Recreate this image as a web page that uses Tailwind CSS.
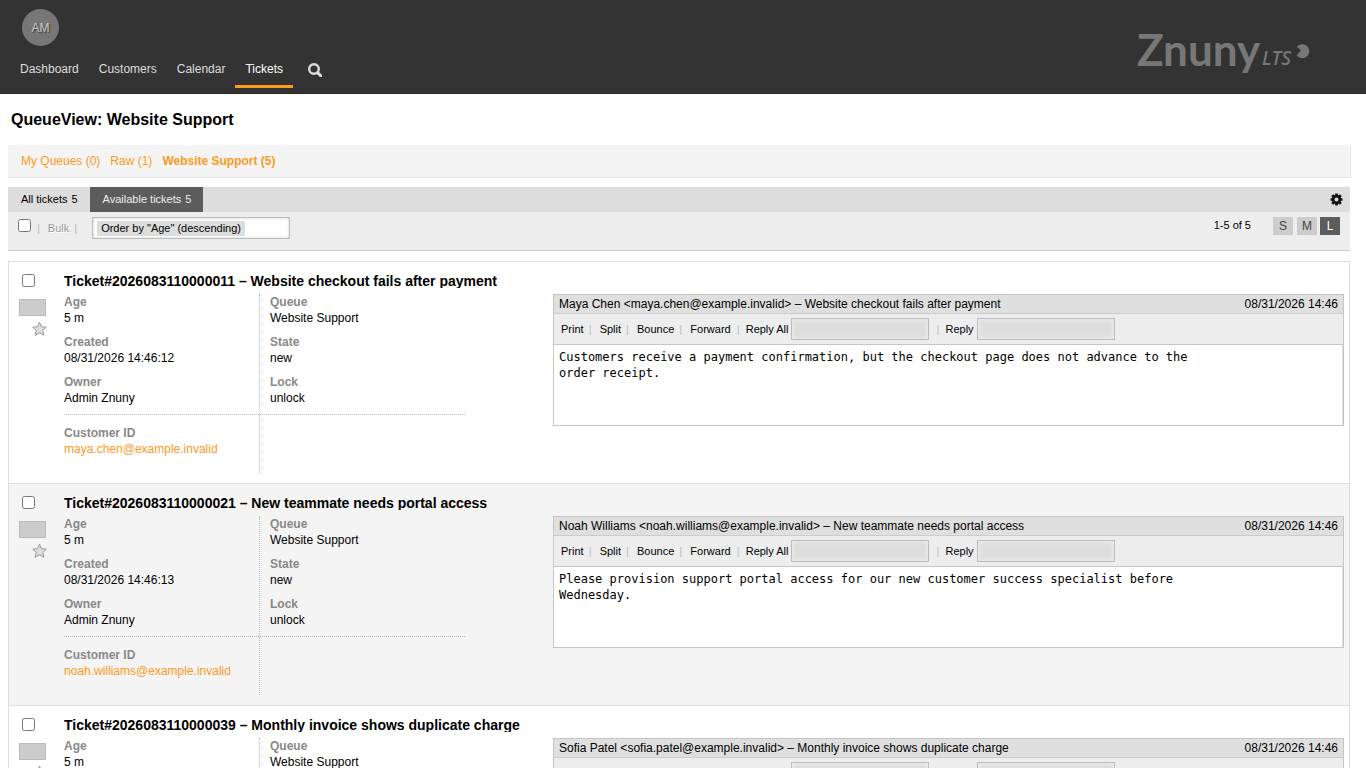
<!DOCTYPE html>
<html lang="en">

<head>
    <meta charset="UTF-8">
    <meta name="viewport" content="width=device-width, initial-scale=1.0">
    <title>QueueView: Website Support - Znuny</title>
    <script src="https://cdn.jsdelivr.net/npm/@tailwindcss/browser@4"></script>
    <style>
        body {
            font-family: 'Liberation Sans', Arial, sans-serif;
        }
    </style>
</head>

<body class="bg-white text-black text-[12px] leading-4">
    <header class="flex justify-between h-[94px] bg-[#333] border-b border-[#2b2b2b]">
        <div class="pt-[9px] pl-[10px]">
            <button type="button" aria-label="Admin menu"
                class="block ml-3 size-[37px] rounded-full bg-[#777] text-[#ccc] text-[12px] [text-shadow:1px_1px_1px_#333]">AM</button>
            <nav class="flex mt-[11px] text-[#ddd]">
                <a href="#" class="h-[31px] pt-1 px-[10px]">Dashboard</a>
                <a href="#" class="h-[31px] pt-1 px-[10px]">Customers</a>
                <a href="#" class="h-[31px] pt-1 px-[10px]">Calendar</a>
                <a href="#" class="h-[31px] pt-1 px-[10px] text-white border-b-3 border-[#ff9922]">Tickets</a>
                <a href="#" aria-label="Search" class="pt-[6px] px-[15px]">
                    <svg class="size-[14px]" viewBox="0 0 14 14" fill="none" stroke="#ddd">
                        <circle cx="6" cy="6" r="4.8" stroke-width="2.4" />
                        <path d="M9.6 9.6L12.7 12.7" stroke-width="3" stroke-linecap="round" />
                    </svg>
                </a>
            </nav>
        </div>
        <!-- Logo -->
        <svg class="w-[180px] h-[52px] mt-[29px] mr-[50px]" viewBox="0 0 180 52" fill="#777" role="img" aria-label="Znuny LTS">
            <text x="1" y="37" font-family="Lato, sans-serif" font-size="44" font-weight="700">Znuny</text>
            <text x="126" y="36" font-family="Open Sans, sans-serif" font-size="19" font-style="italic" font-weight="600">LTS</text>
            <path d="M165 21.5L160.8 17.8A7 7 0 1 1 160.6 26.2Z" />
        </svg>
    </header>

    <main class="pl-2 pr-4">
        <h1 class="pl-[3px] pt-4 pb-[15px] text-[16px] leading-5 font-bold">QueueView: Website Support</h1>

        <ul class="flex gap-[10px] -mr-px px-[13px] h-[33px] pt-2 bg-[#f4f4f4] border-r border-b border-[#e8e8e8] text-[#ff9922]">
            <li><a href="#">My Queues (0)</a></li>
            <li><a href="#">Raw (1)</a></li>
            <li><a href="#" class="font-bold">Website Support (5)</a></li>
        </ul>

        <div class="flex mt-[9px] h-[25px] bg-[#ddd] text-[11px] leading-[25px]">
            <a href="#" class="flex gap-1 pl-[13px] pr-3">All tickets <span>5</span></a>
            <a href="#" class="flex gap-1 pl-[13px] pr-3 bg-[#5c5c5c] text-[#eee]">Available tickets <span>5</span></a>
            <button type="button" aria-label="Settings" class="flex items-center ml-auto mr-[7px]">
                <svg class="size-[13px]" viewBox="0 0 24 24" fill="none" stroke="#111">
                    <circle cx="12" cy="12" r="6.2" stroke-width="5" />
                    <path d="M12 1V5M12 19V23M1 12H5M19 12H23M4 4L7 7M17 17L20 20M20 4L17 7M4 20L7 17" stroke-width="5" />
                </svg>
            </button>
        </div>

        <div class="flex items-start h-[39px] pl-[10px] pr-[10px] bg-[#ededed] border-b border-[#ccc] text-[11px]">
            <input type="checkbox" aria-label="Select all tickets" class="mt-[7px] size-[13px]">
            <span class="mt-2 ml-[6px] text-[#bbb]">|</span>
            <button type="button" disabled class="mt-2 ml-[8px] text-[#999] [text-shadow:1px_1px_0_#fff]">Bulk</button>
            <span class="mt-2 ml-[5px] text-[#bbb]">|</span>
            <div class="mt-[5px] ml-[15px] w-[198px] h-[22px] pt-[3px] pl-1 bg-white border border-[#bbb] shadow-[inset_0_0_3px_#ccc]">
                <select aria-label="Order by"
                    class="block appearance-none w-[148px] h-[15px] pl-1 bg-[#ddd] text-[11px] leading-[15px]">
                    <option>Order by "Age" (descending)</option>
                </select>
            </div>
            <span class="ml-auto mt-[5px]">1-5 of 5</span>
            <div class="flex gap-[3px] mt-[5px] ml-[22px] text-[12px] leading-[18px] text-center text-[#444]">
                <a href="#" class="w-5 h-[18px] mr-px bg-[#ccc]">S</a>
                <a href="#" class="w-5 h-[18px] bg-[#ccc]">M</a>
                <a href="#" class="w-5 h-[18px] bg-[#5c5c5c] text-white">L</a>
            </div>
        </div>

        <ul id="tickets" class="mt-[10px] border-x border-t border-[#ddd]">
            <!-- Tickets will be inserted here -->
        </ul>
    </main>

    <script>
        const tickets = [
            {
                number: '2026083110000011', title: 'Website checkout fails after payment', created: '08/31/2026 14:46:12',
                name: 'Maya Chen', email: 'maya.chen@example.invalid',
                body: 'Customers receive a payment confirmation, but the checkout page does not advance to the\norder receipt.'
            },
            {
                number: '2026083110000021', title: 'New teammate needs portal access', created: '08/31/2026 14:46:13',
                name: 'Noah Williams', email: 'noah.williams@example.invalid',
                body: 'Please provision support portal access for our new customer success specialist before\nWednesday.'
            },
            {
                number: '2026083110000039', title: 'Monthly invoice shows duplicate charge', created: '08/31/2026 14:46:13',
                name: 'Sofia Patel', email: 'sofia.patel@example.invalid',
                body: ''
            }
        ];

        const field = (label, value) => `
            <dt class="font-bold text-[#888]">${label}</dt>
            <dd class="mb-2">${value}</dd>`;

        const separator = '<span class="w-[3px] ml-[5px] mr-2 text-[#bbb]">|</span>';

        document.getElementById('tickets').innerHTML = tickets.map((t, i) => `
            <li class="flex items-start h-[222px] pt-[11px] border-b border-[#ddd] ${i % 2 ? 'bg-[#f4f4f4]' : 'bg-white'}">
                <div class="w-[55px] shrink-0 pl-[10px]">
                    <input type="checkbox" id="ticket${i}" aria-label="Select ticket ${t.number}" class="block mt-px ml-[3px] size-[13px]">
                    <div class="mt-3 w-[27px] h-[17px] bg-[#ccc] border border-[#bbb]"></div>
                    <svg class="mt-[5px] ml-3 w-4 h-4" viewBox="0 0 16 16" fill="#ddd" stroke="#999">
                        <path d="M8.5 1.2L10.5 5.7L15.3 6.2L11.7 9.5L13 14.2L8.5 11.9L4 14.2L5.3 9.5L1.7 6.2L6.5 5.7Z" />
                    </svg>
                </div>
                <div class="flex-1 min-w-0">
                    <h2 class="h-[15px] mb-[6px] overflow-hidden whitespace-nowrap text-[14px] leading-4 font-bold">Ticket#${t.number} – ${t.title}</h2>
                    <div class="flex items-start justify-between">
                        <div class="grid grid-cols-[196px_1fr] w-[401px]">
                            <dl class="h-[120px] border-r border-dotted border-[#bbb]">
                                ${field('Age', '5 m')}${field('Created', t.created)}${field('Owner', 'Admin Znuny')}
                            </dl>
                            <dl class="pl-[10px]">
                                ${field('Queue', 'Website Support')}${field('State', 'new')}${field('Lock', 'unlock')}
                            </dl>
                            <div class="col-span-2 border-t border-dotted border-[#bbb]"></div>
                            <dl class="h-[58px] pt-[10px] border-r border-dotted border-[#bbb]">
                                ${field('Customer ID', `<a href="#" class="text-[#ff9922]">${t.email}</a>`)}
                            </dl>
                        </div>
                        <article class="w-[59%] max-w-[791px] grow ml-[88px] h-[132px] mr-[5px] bg-white border border-[#c5c5c5]">
                            <div class="flex justify-between h-[19px] pl-[5px] pr-[5px] leading-[18px] bg-[#dfdfdf] border-b border-[#ccc]">
                                <span>${t.name} &lt;${t.email}&gt; – ${t.title}</span>
                                <span>08/31/2026 14:46</span>
                            </div>
                            <div class="flex items-center h-[31px] pl-[7px] bg-[#ededed] border-b border-[#c5c5c5] text-[11px]">
                                <a href="#">Print</a>${separator}
                                <a href="#">Split</a>${separator}
                                <a href="#">Bounce</a>${separator}
                                <a href="#">Forward</a>
                                <span class="w-[3px] mx-[6px] text-[#bbb]">|</span>
                                <label for="replyAll${i}">Reply All</label>
                                <select id="replyAll${i}" class="appearance-none ml-[3px] w-[138px] h-[22px] bg-[#ddd] border border-[#bbb] shadow-[inset_0_0_4px_1px_#eee]"></select>
                                <span class="w-[3px] ml-[7px] mr-[6px] text-[#bbb]">|</span>
                                <label for="reply${i}">Reply</label>
                                <select id="reply${i}" class="appearance-none ml-[3px] w-[138px] h-[22px] bg-[#ddd] border border-[#bbb] shadow-[inset_0_0_4px_1px_#eee]"></select>
                            </div>
                            <pre class="h-20 pt-1 pl-[5px] border-r border-[#ddd] font-['DejaVu_Sans_Mono',monospace] text-[12px] leading-4">${t.body}</pre>
                        </article>
                    </div>
                </div>
            </li>`).join('');
    </script>
</body>

</html>
